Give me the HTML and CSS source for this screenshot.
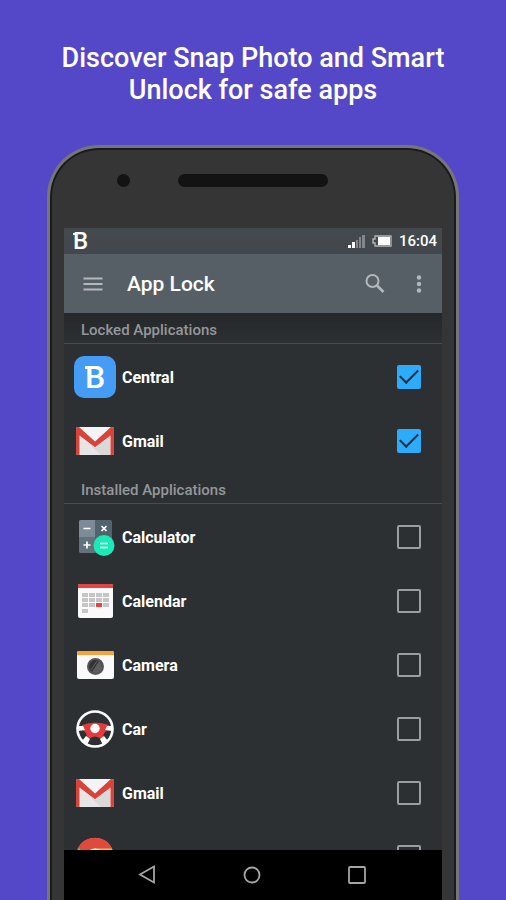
FILE: index.html
```html
<!DOCTYPE html>
<html lang="en">
<head>
<meta charset="utf-8">
<meta name="viewport" content="width=device-width, initial-scale=1">
<title>App Lock</title>
<link rel="stylesheet" href="styles.css">
</head>
<body>
<svg class="symbols" aria-hidden="true">
  <defs>
    <symbol id="gmail" viewBox="0 0 42 42">
      <rect x="2" y="7" width="38" height="28" rx="2" fill="#eeeeee"/>
      <path d="M6 16 21 28 36 16V35H6Z" fill="#e6e6e6"/>
      <path d="M21 28 36 16V35H27L12 21Z" fill="#d9d9d9"/>
      <path d="M5 7H37L21 22Z" fill="#f4f4f4"/>
      <path d="M2 9Q2 7 4 7H5L21 21.500 37 7H38Q40 7 40 9V33Q40 35 38 35H36.500V15.500L21 27.300 5.500 15.500V35H4Q2 35 2 33Z" fill="#d8443a"/>
    </symbol>
  </defs>
</svg>
<main class="page">
  <h1 class="headline">Discover Snap Photo and Smart Unlock for safe apps</h1>
  <div class="phone">
    <div class="phone-top">
      <span class="camera-dot"></span>
      <span class="speaker"></span>
    </div>
    <div class="screen">
      <div class="status-bar">
        <span class="brand">B</span>
        <svg class="signal" viewBox="0 0 18 14" aria-hidden="true">
          <path d="M0 11H3V14H0Z M4 8H7V14H4Z" fill="#fff"/>
          <path d="M8 6H10V14H8Z M11 3H13V14H11Z M14 1H17V14H14Z" fill="#80868a"/>
        </svg>
        <svg class="battery" viewBox="0 0 22 12" aria-hidden="true">
          <path d="M4 1H20V11H4V8H2V4H4Z" fill="none" stroke="#b3b7ba" stroke-width="1.3"/>
          <rect x="7" y="2" width="12" height="8" fill="#fff"/>
        </svg>
        <time class="clock">16:04</time>
      </div>
      <header class="app-bar">
        <button class="icon-button" type="button" aria-label="Menu">
          <svg viewBox="0 0 24 24"><path d="M2.500 6.500H21.500M2.500 12H21.500M2.500 17.500H21.500" stroke="#b3b8bc" stroke-width="2"/></svg>
        </button>
        <h2 class="app-title">App Lock</h2>
        <button class="icon-button" type="button" aria-label="Search">
          <svg viewBox="0 0 24 24"><g fill="none" stroke="#b3b8bc" stroke-width="2"><circle cx="9.500" cy="9" r="6"/><path d="M14 13.500 20.500 20" stroke-width="2.600"/></g></svg>
        </button>
        <button class="icon-button" type="button" aria-label="More options">
          <svg viewBox="0 0 24 24"><g fill="#b3b8bc"><circle cx="12" cy="5.500" r="2.200"/><circle cx="12" cy="12" r="2.200"/><circle cx="12" cy="18.500" r="2.200"/></g></svg>
        </button>
      </header>
      <div class="content">
        <section>
          <h3 class="section-title shaded">Locked Applications</h3>
          <ul class="apps">
            <li><label class="app">
              <span class="central-icon"><span class="brand">B</span></span>
              <span class="app-name">Central</span>
              <input class="check" type="checkbox" checked>
            </label></li>
            <li><label class="app">
              <svg class="app-icon"><use href="#gmail"/></svg>
              <span class="app-name">Gmail</span>
              <input class="check" type="checkbox" checked>
            </label></li>
          </ul>
        </section>
        <section>
          <h3 class="section-title">Installed Applications</h3>
          <ul class="apps">
            <li><label class="app">
              <svg class="app-icon" viewBox="0 0 42 42">
                <rect x="5" y="4" width="33" height="33" rx="2" fill="#51646e"/>
                <path d="M7 4H21V21H5V6Q5 4 7 4Z" fill="#7b8c98"/>
                <path d="M5 21H21V37H7Q5 37 5 35Z" fill="#62737e"/>
                <g stroke="#fff" stroke-width="1.700"><path d="M9.500 12.500H16.500M9.500 29H16.500M13 25.500V32.500M27.500 10 32.500 15M32.500 10 27.500 15"/></g>
                <circle cx="30" cy="29.500" r="10.500" fill="#1de9b6"/>
                <path d="M26 27.500H34M26 31.500H34" stroke="#fff" stroke-width="1.700"/>
              </svg>
              <span class="app-name">Calculator</span>
              <input class="check" type="checkbox">
            </label></li>
            <li><label class="app">
              <svg class="app-icon" viewBox="0 0 42 42">
                <rect x="4" y="4" width="35" height="34" rx="2" fill="#fafafa"/>
                <path d="M4 8V6Q4 4 6 4H37Q39 4 39 6V8Z" fill="#e5433d"/>
                <g fill="#c6c6c6">
                  <path d="M8 13H14V17H8ZM15 13H21V17H15ZM22 13H28V17H22ZM29 13H35V17H29Z"/>
                  <path d="M8 18H14V22H8ZM15 18H21V22H15ZM22 18H28V22H22ZM29 18H35V22H29Z"/>
                  <path d="M8 23H14V27H8ZM15 23H21V27H15ZM29 23H35V27H29ZM8 29H14V33H8Z"/>
                </g>
                <rect x="22" y="23" width="6" height="4" fill="#e8443e"/>
              </svg>
              <span class="app-name">Calendar</span>
              <input class="check" type="checkbox">
            </label></li>
            <li><label class="app">
              <svg class="app-icon" viewBox="0 0 42 42">
                <rect x="3" y="7" width="37" height="28" rx="2" fill="#fafafa"/>
                <path d="M3 11V9Q3 7 5 7H38Q40 7 40 9V11Z" fill="#f6a33b"/>
                <circle cx="21.500" cy="22.500" r="8.500" fill="#555"/>
                <circle cx="21.500" cy="22.500" r="6.500" fill="#343434"/>
                <path d="M25 17 18 28Q24 31 27.500 26Q29 21 25 17Z" fill="#5e5e5e"/>
                <path d="M23 17 17 26" stroke="#606060" stroke-width="1"/>
              </svg>
              <span class="app-name">Camera</span>
              <input class="check" type="checkbox">
            </label></li>
            <li><label class="app">
              <svg class="app-icon" viewBox="0 0 42 42">
                <path d="M8 17Q21 12 35 17L34 22Q29 24 29 30L27 31Q21 26 15 31L13 30Q13 24 8 22Z" fill="#e5393c"/>
                <path d="M3 18H9L11 22 4 23ZM39 18H33L31 22 38 23ZM12 28 16 31 13 37 8 33ZM30 28 26 31 29 37 34 33Z" fill="#fff"/>
                <circle cx="21" cy="21" r="17.500" fill="none" stroke="#fff" stroke-width="2.600"/>
                <circle cx="21" cy="20.500" r="4.700" fill="#fff"/>
              </svg>
              <span class="app-name">Car</span>
              <input class="check" type="checkbox">
            </label></li>
            <li><label class="app">
              <svg class="app-icon"><use href="#gmail"/></svg>
              <span class="app-name">Gmail</span>
              <input class="check" type="checkbox">
            </label></li>
            <li><div class="app">
              <svg class="app-icon" viewBox="0 0 42 42">
                <circle cx="21" cy="21" r="19" fill="#f5b63b"/>
                <path d="M4 12A19 19 0 0 1 38 12.500H21L12 18Z" fill="#e04a3e"/>
                <path d="M4 12 12 27 20 40A19 19 0 0 1 4 12Z" fill="#2e9e63"/>
                <circle cx="21" cy="21.500" r="9" fill="#fff"/>
                <circle cx="21" cy="21.500" r="7" fill="#4285f4"/>
              </svg>
              <span class="app-name"></span>
              <input class="check" type="checkbox" aria-label="Chrome">
            </div></li>
          </ul>
        </section>
      </div>
      <nav class="nav-bar">
        <button class="icon-button" type="button" aria-label="Back"><svg viewBox="0 0 24 24"><path d="M5 11.500 19 3.500V19.500Z"/></svg></button>
        <button class="icon-button" type="button" aria-label="Home"><svg viewBox="0 0 24 24"><circle cx="12" cy="12" r="7.500"/></svg></button>
        <button class="icon-button" type="button" aria-label="Recent apps"><svg viewBox="0 0 24 24"><rect x="4" y="4" width="16" height="16" rx="1"/></svg></button>
      </nav>
    </div>
  </div>
</main>
</body>
</html>
```
FILE: styles.css
```css
* { box-sizing: border-box; }

body {
  margin: 0;
  background: #5548c8;
  color: #fff;
  font-family: Roboto, "Liberation Sans", sans-serif;
}

h1, h2, h3, ul { margin: 0; padding: 0; }
ul { list-style: none; }
svg { display: block; }

.symbols { position: absolute; width: 0; height: 0; }

.page {
  display: flex;
  flex-direction: column;
  height: 100vh;
  overflow: hidden;
}

.headline {
  padding: 42px 48px 39px;
  font-size: 27px;
  line-height: 32px;
  font-weight: 500;
  text-align: center;
}

/* Device frame, running off the bottom of the window */
.phone {
  flex: 1;
  min-height: 0;
  display: flex;
  flex-direction: column;
  margin: 0 47px -4px;
  padding: 0 14px 4px;
  border: 3px solid #76757a;
  border-bottom: 0;
  border-radius: 52px 52px 0 0;
  background: #353535;
  box-shadow: inset 0 0 0 2px #1b1b1c;
}

.phone-top {
  flex: none;
  display: grid;
  grid-template-columns: 1fr 150px 1fr;
  height: 80px;
  padding-top: 26px;
}

.camera-dot {
  width: 13px;
  height: 13px;
  margin-left: 53px;
  border-radius: 50%;
  background: #131313;
}

.speaker {
  height: 13px;
  border-radius: 7px;
  background: #131313;
}

.screen {
  flex: 1;
  min-height: 0;
  display: flex;
  flex-direction: column;
  background: #2d3033;
}

.status-bar {
  flex: none;
  display: flex;
  align-items: center;
  height: 26px;
  padding: 0 5px 0 9px;
  background: linear-gradient(#454a4e, #41474d);
}

.brand {
  position: relative;
  font-size: 24px;
  line-height: 26px;
  font-weight: 500;
}

.brand::before {
  content: "";
  position: absolute;
  top: 5px;
  left: 0;
  width: 4px;
  height: 2px;
  background: currentColor;
}

.signal { width: 18px; height: 14px; margin-left: auto; }
.battery { width: 22px; height: 12px; margin: 0 6px 0 5px; }
.clock { font-size: 15px; line-height: 26px; font-weight: 500; }

.app-bar {
  flex: none;
  display: flex;
  align-items: center;
  gap: 20px;
  height: 59px;
  padding: 0 11px 0 17px;
  background: #565e66;
}

.icon-button {
  flex: none;
  width: 24px;
  height: 24px;
  padding: 0;
  border: 0;
  background: none;
}

.app-title {
  flex: 1;
  padding-left: 2px;
  font-size: 21px;
  line-height: 28px;
  font-weight: 500;
}

.content { flex: 1; min-height: 0; overflow: hidden; }

.section-title {
  height: 31px;
  padding: 3px 17px 0;
  border-bottom: 1px solid #4a4d50;
  color: #94979a;
  font-size: 15px;
  line-height: 28px;
  font-weight: 500;
}

.shaded { background: linear-gradient(#25282b, #2d3033); }

.apps { padding-top: 1px; }

.app {
  display: flex;
  align-items: center;
  gap: 6px;
  height: 64px;
  padding: 0 21px 0 10px;
}

.app-icon { flex: none; width: 42px; height: 42px; }

.central-icon {
  display: grid;
  place-items: center;
  width: 42px;
  height: 42px;
  border-radius: 10px;
  background: #459cf5;
}

.central-icon .brand { font-size: 32px; line-height: 32px; }
.central-icon .brand::before { height: 3px; }

.app-name {
  flex: 1;
  padding-top: 2px;
  font-size: 16px;
  line-height: 24px;
  font-weight: 700;
}

.check {
  appearance: none;
  display: grid;
  grid-template-rows: 20px;
  place-items: center;
  width: 24px;
  height: 24px;
  margin: 0;
  border: 2px solid #9b9da0;
  border-radius: 2px;
}

.check:checked { border-color: #2fabfb; background: #2fabfb; }

.check:checked::after {
  content: "";
  width: 8px;
  height: 16px;
  margin-bottom: 6px;
  border: solid #20303a;
  border-width: 0 2px 2px 0;
  transform: rotate(45deg);
}

.nav-bar {
  flex: none;
  display: flex;
  justify-content: center;
  align-items: center;
  gap: 81px;
  height: 50px;
  padding-right: 2px;
  background: #000;
}

.nav-bar svg { fill: none; stroke: #a5a5a5; stroke-width: 1.8; }
```
